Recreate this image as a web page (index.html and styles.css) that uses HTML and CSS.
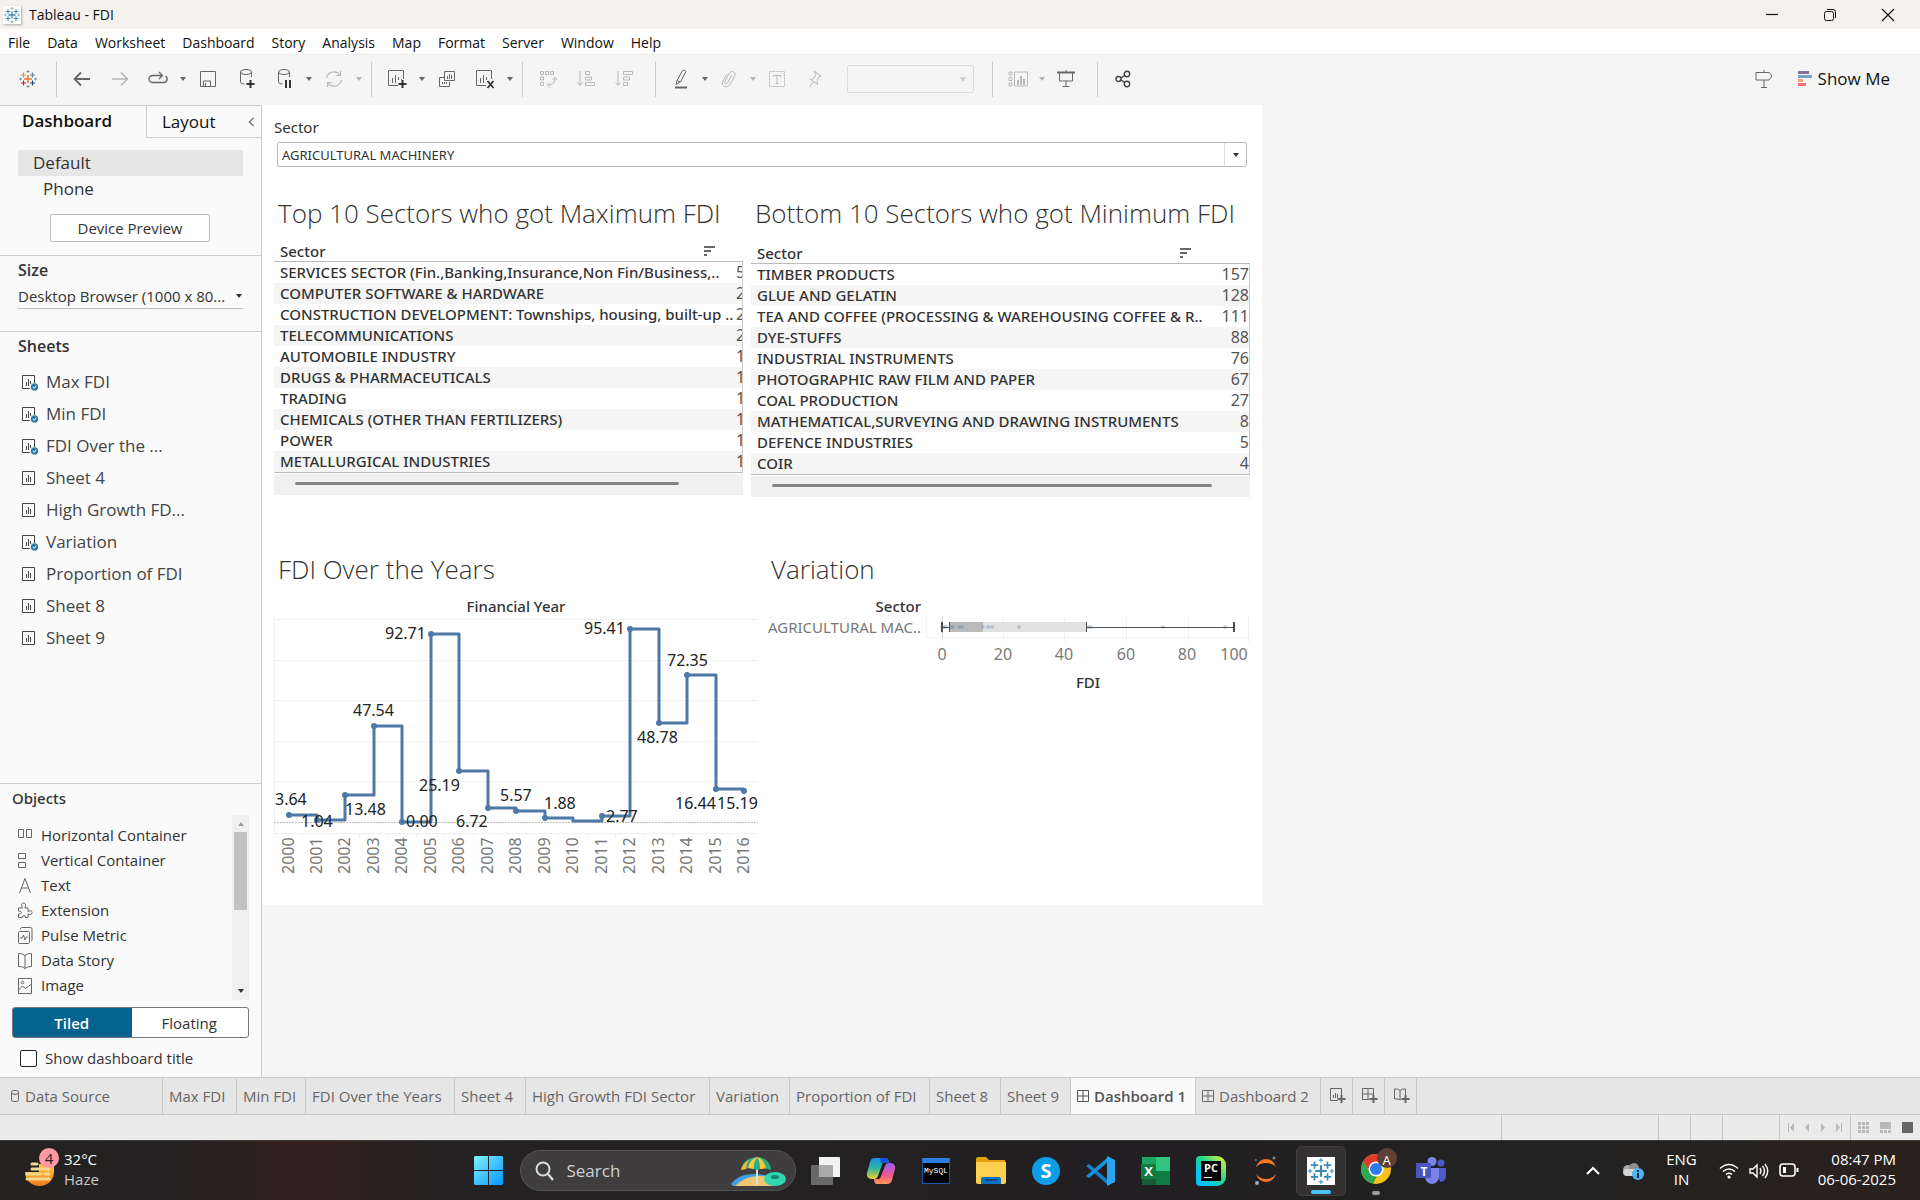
FILE: index.html
```html
<!DOCTYPE html>
<html lang="en">
<head>
<meta charset="utf-8">
<title>Tableau - FDI</title>
<link rel="stylesheet" href="styles.css">
</head>
<body>
<svg class="sprite" aria-hidden="true">
  <symbol id="caret" viewBox="0 0 8 6"><path d="M1 1h6L4 5z" fill="currentColor"/></symbol>
  <symbol id="sheet" viewBox="0 0 18 18"><path d="M1.500 2.500h12v13h-12zM5.500 9v4M7.500 6v7M9.500 8v5" /></symbol>
  <symbol id="sheet-used" viewBox="0 0 18 18"><path d="M9 15.500H1.500v-13h12V10M5.500 9v4M7.500 6v7M9.500 8v3"/><circle cx="13.500" cy="14" r="3.700" fill="#2e7ea6" stroke="none"/><path d="M11.800 14l1.300 1.300 2.200-2.600" stroke="#fff"/></symbol>
  <symbol id="grid4" viewBox="0 0 12 12"><path d="M.5.5h11v11H.5zM6 .5v11M.5 6h11"/></symbol>
  <symbol id="sortmark" viewBox="0 0 11 10"><path d="M0 1h11M0 5h7M0 9h3" stroke-width="2"/></symbol>
  <symbol id="marks" viewBox="0 0 18 18">
    <path d="M9 5v8M5 9h8" stroke="var(--c1)" stroke-width="1.500"/>
    <path d="M4.500 2.500v5M2 5h5" stroke="var(--c2)" stroke-width="1.200"/>
    <path d="M13.500 2.500v5M11 5h5" stroke="var(--c3)" stroke-width="1.200"/>
    <path d="M4.500 10.500v5M2 13h5" stroke="var(--c4)" stroke-width="1.200"/>
    <path d="M13.500 10.500v5M11 13h5" stroke="var(--c5)" stroke-width="1.200"/>
    <path d="M9 0v3M7.500 1.500h3M9 15v3M7.500 16.500h3M1.500 7.500v3M0 9h3M16.500 7.500v3M15 9h3" stroke="var(--c6)"/>
  </symbol>
</svg>

<div class="app">
  <header class="titlebar">
    <span class="app-icon"><svg class="marks-blue" width="16" height="16"><use href="#marks"/></svg></span>
    <span class="app-title">Tableau - FDI</span>
    <div class="window-buttons">
      <button aria-label="Minimize"><svg width="14" height="14" viewBox="0 0 14 14"><path d="M1 6.500h12" stroke-width="1.200"/></svg></button>
      <button aria-label="Restore"><svg width="14" height="14" viewBox="0 0 14 14"><rect x="1.500" y="3.500" width="9" height="9" rx="2"/><path d="M4 1.500h6q2.500 0 2.500 2.500v6"/></svg></button>
      <button aria-label="Close"><svg width="14" height="14" viewBox="0 0 14 14"><path d="M1 1l12 12M13 1L1 13" stroke-width="1.200"/></svg></button>
    </div>
  </header>

  <nav class="menubar">
    <button>File</button><button>Data</button><button>Worksheet</button><button>Dashboard</button><button>Story</button><button>Analysis</button><button>Map</button><button>Format</button><button>Server</button><button>Window</button><button>Help</button>
  </nav>

  <div class="toolbar">
    <button class="logo" aria-label="Start page"><svg class="marks-color" width="18" height="18"><use href="#marks"/></svg></button>
    <i class="sep"></i>
    <div class="tools">
      <button aria-label="Undo"><svg width="18" height="18" viewBox="0 0 18 18"><path d="M17 9H2M8 2.500L1.500 9 8 15.500" stroke-width="1.800"/></svg></button>
      <button class="off" aria-label="Redo"><svg width="18" height="18" viewBox="0 0 18 18"><path d="M1 9h15M10 2.500L16.500 9 10 15.500" stroke-width="1.600"/></svg></button>
      <button aria-label="Replay"><svg width="20" height="18" viewBox="0 0 20 18"><path d="M14 5.500H4.500a3.500 3.500 0 0 0 0 7h11a3.500 3.500 0 0 0 2-6.500M11 2l3.500 3.500L11 9" stroke-width="1.300"/></svg></button>
      <button class="more" aria-label="Replay options"><svg width="8" height="6"><use href="#caret"/></svg></button>
      <button aria-label="Save"><svg width="18" height="18" viewBox="0 0 18 18"><path d="M1.500 1.500h15v15h-15zM4.500 16v-5h7v5M6.500 13v3"/></svg></button>
      <button aria-label="New data source"><svg width="18" height="22" viewBox="0 0 18 22"><path d="M3.500 4v10q0 2 4 2M14.500 4v5"/><ellipse cx="9" cy="4" rx="5.500" ry="2.500"/><path d="M13.500 12v8M9.500 16h8" stroke="#333" stroke-width="2"/></svg></button>
      <button aria-label="Pause auto updates"><svg width="18" height="22" viewBox="0 0 18 22"><path d="M3.500 4v10q0 2 4 2M14.500 4v5"/><ellipse cx="9" cy="4" rx="5.500" ry="2.500"/><path d="M11 12v8M15 12v8" stroke="#333" stroke-width="2"/></svg></button>
      <button class="more" aria-label="Update options"><svg width="8" height="6"><use href="#caret"/></svg></button>
      <button class="off" aria-label="Run update"><svg width="18" height="18" viewBox="0 0 18 18"><path d="M1.500 8A7.500 7.500 0 0 1 15 5M16.500 10A7.500 7.500 0 0 1 3 13M15.500 1v4.500H11M2.500 17v-4.500H7" stroke-width="1.200"/></svg></button>
      <button class="more off" aria-label="Run options"><svg width="8" height="6"><use href="#caret"/></svg></button>
    </div>
    <i class="sep"></i>
    <div class="tools">
      <button aria-label="New worksheet"><svg width="20" height="20" viewBox="0 0 20 20"><path d="M11 16.500H1.500v-15h15V10M5.500 9v5M8.500 6v8M11.500 8v3M14.500 10v1"/><path d="M15.500 11v8M11.500 15h8" stroke="#333" stroke-width="2"/></svg></button>
      <button class="more" aria-label="New worksheet options"><svg width="8" height="6"><use href="#caret"/></svg></button>
      <button aria-label="Duplicate"><svg width="18" height="18" viewBox="0 0 18 18"><path d="M6.500 1.500h10v9h-10zM9.500 6v3M11.500 4v5M13.500 5v4M6 7.500H1.500v9h10V12M4.500 12v2M6.500 12v2M8.500 12v2"/></svg></button>
      <button aria-label="Clear sheet"><svg width="20" height="20" viewBox="0 0 20 20"><path d="M11 16.500H1.500v-15h15V10M5.500 9v5M8.500 6v8M11.500 8v3"/><path d="M12.500 12l6 7M18.500 12l-6 7" stroke="#333" stroke-width="1.800"/></svg></button>
      <button class="more" aria-label="Clear options"><svg width="8" height="6"><use href="#caret"/></svg></button>
    </div>
    <i class="sep"></i>
    <div class="tools roomy">
      <button class="off" aria-label="Swap rows and columns"><svg width="18" height="18" viewBox="0 0 18 18"><path d="M1.500 1.500h3v3h-3zM6.500 1.500h3v3h-3zM11.500 1.500h3v3h-3zM1.500 7h3v3h-3zM1.500 12.500h3v3h-3zM16 8q0 7-7 7M13.500 10L16 7.500l2 2.500M11 12.500L8.500 15l2.500 2.500"/></svg></button>
      <button class="off" aria-label="Sort ascending"><svg width="18" height="18" viewBox="0 0 18 18"><path d="M3 1v14M.5 12.500L3 15.500l2.500-3M8.500 1.500h4v3h-4zM8.500 7h6v3h-6zM8.500 12.500h9v3h-9z"/></svg></button>
      <button class="off" aria-label="Sort descending"><svg width="18" height="18" viewBox="0 0 18 18"><path d="M3 1v14M.5 12.500L3 15.500l2.500-3M8.500 1.500h9v3h-9zM8.500 7h6v3h-6zM8.500 12.500h4v3h-4z"/></svg></button>
    </div>
    <i class="sep"></i>
    <div class="tools tight">
      <button aria-label="Highlight"><svg width="16" height="20" viewBox="0 0 16 20"><path d="M9.500 1.500q2-1 3.500 1L7.500 13l-3.500-1.500zM4 11.500l-1 4 4-2.500"/><path d="M2 18.500h12" stroke-width="2"/></svg></button>
      <button class="more" aria-label="Highlight options"><svg width="8" height="6"><use href="#caret"/></svg></button>
      <button class="off" aria-label="Group"><svg width="16" height="18" viewBox="0 0 16 18"><path d="M11 5l-4.500 8q-1 1.500-2.200.5T4 11l4.500-8q1.500-2.500 4-1.200t1.300 4L9 14.500q-2.500 3.500-5.500 2T2 11l4-7"/></svg></button>
      <button class="more off" aria-label="Group options"><svg width="8" height="6"><use href="#caret"/></svg></button>
      <button class="off" aria-label="Show mark labels"><svg width="18" height="18" viewBox="0 0 18 18"><path d="M1.500 1.500h15v15h-15z" stroke-dasharray="2 1"/><path d="M5.500 7V5.500h7V7M9 5.500v8M7.500 13.500h3"/></svg></button>
      <button class="off" aria-label="Fix axes"><svg width="16" height="18" viewBox="0 0 16 18"><path d="M7 1l7 5-2.500.8-1.500 4.500.5 3L3.500 9.500l3-1L9 4.500zM6.500 11.500L2.500 17"/></svg></button>
    </div>
    <span class="fit"><select disabled aria-label="Fit"><option></option></select><svg width="10" height="7" viewBox="0 0 8 6"><use href="#caret"/></svg></span>
    <i class="sep"></i>
    <div class="tools tight roomy">
      <button class="off" aria-label="Show or hide cards"><svg width="20" height="18" viewBox="0 0 20 18"><path d="M1 2h3v3H1zM1 7.500h3v3H1zM1 13h3v3H1zM6.500 2h13v14h-13z"/><path d="M10 10v5M13 6v9M16 9v6" stroke-width="2"/></svg></button>
      <button class="more off" aria-label="Card options"><svg width="8" height="6"><use href="#caret"/></svg></button>
      <button aria-label="Presentation mode"><svg width="18" height="18" viewBox="0 0 18 18"><path d="M0 2.500h18" stroke-width="2"/><path d="M2.500 3v8h13V3M9 0v2M9 11v6M5.500 16.500h7"/></svg></button>
    </div>
    <i class="sep"></i>
    <div class="tools tight">
      <button aria-label="Share"><svg width="16" height="18" viewBox="0 0 16 18"><g stroke="#444" stroke-width="1.400"><circle cx="3.500" cy="9" r="2.500"/><circle cx="12" cy="4" r="2.700"/><circle cx="12" cy="14" r="2.700"/><path d="M6 8l3.500-2.500M6 10l3.500 2.500"/></g></svg></button>
    </div>
    <div class="right-tools">
      <button aria-label="Guide"><svg width="18" height="20" viewBox="0 0 18 20"><path d="M1 3.500h13l3 3.500-3 4H1zM9 1v2.500M9 11v8M6 18.500h6"/></svg></button>
      <button class="show-me"><svg class="solid" width="14" height="16" viewBox="0 0 14 16"><path d="M0 0h11v3H0z" fill="#84709b"/><path d="M0 4h14v3H0z" fill="#7ba2cc"/><path d="M0 8h5v3H0z" fill="#f2a27e"/><path d="M0 12h8v3H0z" fill="#f9707a"/></svg>Show Me</button>
    </div>
  </div>

  <div class="workspace">
    <aside class="pane">
      <div class="pane-tabs">
        <button class="on">Dashboard</button>
        <button class="layout-tab">Layout <svg width="7" height="10" viewBox="0 0 8 12"><path d="M6.500 1L1.500 6l5 5" stroke="#666" stroke-width="1.400"/></svg></button>
      </div>
      <section class="devices">
        <button class="device on">Default</button>
        <button class="device phone">Phone</button>
        <button class="preview">Device Preview</button>
      </section>
      <section class="size">
        <h2><label for="size">Size</label></h2>
        <span class="size-box"><select id="size"><option>Desktop Browser (1000 x 80...</option></select><svg width="8" height="6"><use href="#caret"/></svg></span>
      </section>
      <section class="sheets">
        <h2>Sheets</h2>
        <ul>
          <li><svg width="18" height="18"><use href="#sheet-used"/></svg>Max FDI</li>
          <li><svg width="18" height="18"><use href="#sheet-used"/></svg>Min FDI</li>
          <li><svg width="18" height="18"><use href="#sheet-used"/></svg>FDI Over the ...</li>
          <li><svg width="18" height="18"><use href="#sheet"/></svg>Sheet 4</li>
          <li><svg width="18" height="18"><use href="#sheet"/></svg>High Growth FD...</li>
          <li><svg width="18" height="18"><use href="#sheet-used"/></svg>Variation</li>
          <li><svg width="18" height="18"><use href="#sheet"/></svg>Proportion of FDI</li>
          <li><svg width="18" height="18"><use href="#sheet"/></svg>Sheet 8</li>
          <li><svg width="18" height="18"><use href="#sheet"/></svg>Sheet 9</li>
        </ul>
      </section>
      <section class="objects">
        <h2>Objects</h2>
        <div class="object-box">
          <ul>
            <li><svg width="16" height="18" viewBox="0 0 16 18"><path d="M1.500 3.500h5v8h-5zM9.500 3.500h5v8h-5z"/></svg>Horizontal Container</li>
            <li><svg width="16" height="18" viewBox="0 0 16 18"><path d="M1.500 2.500h7v5h-7zM1.500 11.500h7v5h-7z"/></svg>Vertical Container</li>
            <li><svg width="16" height="18" viewBox="0 0 16 18"><path d="M2.500 17L8 2.500 13.500 17M4.500 12h7"/></svg>Text</li>
            <li><svg width="16" height="18" viewBox="0 0 16 18"><path d="M1.500 7h4q-2-5 1-5t1.500 5h3v3.500q4-2 4 1t-4 1.500v3.500H8.500q0-2-1.500-2t-1.500 2h-4V13q3 0 3-1.500t-3-1.500z"/></svg>Extension</li>
            <li><svg width="16" height="18" viewBox="0 0 16 18"><rect x="1.500" y="5.500" width="11" height="12" rx="1"/><path d="M3.500 3.500q0-2 1-2h9q1.500 0 1.500 1.500v11q0 1-1 1M3 12h2l1.500-3 1.500 5 1.500-3H11"/></svg>Pulse Metric</li>
            <li><svg width="16" height="18" viewBox="0 0 16 18"><path d="M8 4.500Q5 2 1.500 2.500v13Q5 15 8 17.500q3-2.500 6.500-2v-13Q11 2 8 4.500zM8 4.500v13"/></svg>Data Story</li>
            <li><svg width="16" height="18" viewBox="0 0 16 18"><path d="M1.500 2.500h13v15h-13zM1.500 14l4-4 3 2.500L14.500 8"/><circle cx="5.500" cy="6.500" r="1.300"/></svg>Image</li>
          </ul>
          <div class="scrollbar"><svg width="8" height="6" viewBox="0 0 8 6"><path d="M1 5h6L4 1z" fill="#a0a0a0" stroke="none"/></svg><i></i><svg class="down" width="8" height="6"><use href="#caret"/></svg></div>
        </div>
        <div class="mode"><button class="on">Tiled</button><button>Floating</button></div>
        <label class="check"><input type="checkbox">Show dashboard title</label>
      </section>
    </aside>

    <main class="stage">
      <article class="dash">
        <div class="filter">
          <label for="sector">Sector</label>
          <span class="filter-box"><select id="sector"><option>AGRICULTURAL MACHINERY</option></select><span class="arrow"><svg width="8" height="6"><use href="#caret"/></svg></span></span>
        </div>

        <div class="row tables">
          <section>
            <h3>Top 10 Sectors who got Maximum FDI</h3>
            <table class="max">
              <colgroup><col><col class="num-clip"></colgroup>
              <thead><tr><th scope="col" colspan="2"><span class="head">Sector<svg width="11" height="10"><use href="#sortmark"/></svg></span></th></tr></thead>
              <tbody>
                <tr><td>SERVICES SECTOR (Fin.,Banking,Insurance,Non Fin/Business,..</td><td>5</td></tr>
                <tr><td>COMPUTER SOFTWARE &amp; HARDWARE</td><td>2</td></tr>
                <tr><td>CONSTRUCTION DEVELOPMENT: Townships, housing, built-up ..</td><td>2</td></tr>
                <tr><td>TELECOMMUNICATIONS</td><td>2</td></tr>
                <tr><td>AUTOMOBILE INDUSTRY</td><td>1</td></tr>
                <tr><td>DRUGS &amp; PHARMACEUTICALS</td><td>1</td></tr>
                <tr><td>TRADING</td><td>1</td></tr>
                <tr><td>CHEMICALS (OTHER THAN FERTILIZERS)</td><td>1</td></tr>
                <tr><td>POWER</td><td>1</td></tr>
                <tr><td>METALLURGICAL INDUSTRIES</td><td>1</td></tr>
              </tbody>
            </table>
            <div class="hscroll"><i class="thumb-max"></i></div>
          </section>
          <section>
            <h3>Bottom 10 Sectors who got Minimum FDI</h3>
            <table class="min">
              <colgroup><col><col class="num"></colgroup>
              <thead><tr><th scope="col" colspan="2"><span class="head">Sector<svg width="11" height="10"><use href="#sortmark"/></svg></span></th></tr></thead>
              <tbody>
                <tr><td>TIMBER PRODUCTS</td><td>157</td></tr>
                <tr><td>GLUE AND GELATIN</td><td>128</td></tr>
                <tr><td>TEA AND COFFEE (PROCESSING &amp; WAREHOUSING COFFEE &amp; R..</td><td>111</td></tr>
                <tr><td>DYE-STUFFS</td><td>88</td></tr>
                <tr><td>INDUSTRIAL INSTRUMENTS</td><td>76</td></tr>
                <tr><td>PHOTOGRAPHIC RAW FILM AND PAPER</td><td>67</td></tr>
                <tr><td>COAL PRODUCTION</td><td>27</td></tr>
                <tr><td>MATHEMATICAL,SURVEYING AND DRAWING INSTRUMENTS</td><td>8</td></tr>
                <tr><td>DEFENCE INDUSTRIES</td><td>5</td></tr>
                <tr><td>COIR</td><td>4</td></tr>
              </tbody>
            </table>
            <div class="hscroll"><i class="thumb-min"></i></div>
          </section>
        </div>

        <div class="row charts">
          <section>
            <h3>FDI Over the Years</h3>
            <svg class="chart" width="485" height="286" viewBox="0 -22 485 286">
              <text class="bold" x="242" y="-5" text-anchor="middle">Financial Year</text>
              <g class="grid"><path d="M0 2.500h484M0 43.500h484M0 83.500h484M0 124.500h484M0 164.500h484M0 216.500h484M.5 0v220M28.500 217v3M56.500 217v3M85.500 217v3M113.500 217v3M142.500 217v3M170.500 217v3M199.500 217v3M227.500 217v3M256.500 217v3M284.500 217v3M313.500 217v3M341.500 217v3M370.500 217v3M398.500 217v3M427.500 217v3M455.500 217v3"/></g>
              <path d="M0 205.500h484" stroke="#bbb" stroke-dasharray="2 1"/>
              <path class="line" d="M15 198H43V203H71V178H100V109H128V205H157V17H185V154H214V191H242V194H271V201H299V204H328V199H356V12H385V106H413V58H442V172H470V174"/>
              <g class="dots"><circle cx="15" cy="198" r="3"/><circle cx="43" cy="203" r="3"/><circle cx="71" cy="178" r="3"/><circle cx="100" cy="109" r="3"/><circle cx="128" cy="205" r="3"/><circle cx="157" cy="17" r="3"/><circle cx="185" cy="154" r="3"/><circle cx="214" cy="191" r="3"/><circle cx="242" cy="194" r="3"/><circle cx="271" cy="201" r="3"/><circle cx="328" cy="199" r="3"/><circle cx="356" cy="12" r="3"/><circle cx="385" cy="106" r="3"/><circle cx="413" cy="58" r="3"/><circle cx="442" cy="172" r="3"/><circle cx="470" cy="174" r="3"/></g>
              <g class="values">
                <text x="1" y="188">3.64</text><text x="27" y="210">1.04</text><text x="71" y="198">13.48</text><text x="79" y="99">47.54</text><text x="132" y="210">0.00</text><text x="111" y="22">92.71</text><text x="145" y="174">25.19</text><text x="182" y="210">6.72</text><text x="226" y="184">5.57</text><text x="270" y="192">1.88</text><text x="332" y="205">2.77</text><text x="310" y="17">95.41</text><text x="363" y="126">48.78</text><text x="393" y="49">72.35</text><text x="401" y="192">16.44</text><text x="443" y="192">15.19</text>
              </g>
              <g class="years">
                <text transform="translate(20 257) rotate(-90)">2000</text><text transform="translate(48 257) rotate(-90)">2001</text><text transform="translate(76 257) rotate(-90)">2002</text><text transform="translate(105 257) rotate(-90)">2003</text><text transform="translate(133 257) rotate(-90)">2004</text><text transform="translate(162 257) rotate(-90)">2005</text><text transform="translate(190 257) rotate(-90)">2006</text><text transform="translate(219 257) rotate(-90)">2007</text><text transform="translate(247 257) rotate(-90)">2008</text><text transform="translate(276 257) rotate(-90)">2009</text><text transform="translate(304 257) rotate(-90)">2010</text><text transform="translate(333 257) rotate(-90)">2011</text><text transform="translate(361 257) rotate(-90)">2012</text><text transform="translate(390 257) rotate(-90)">2013</text><text transform="translate(418 257) rotate(-90)">2014</text><text transform="translate(447 257) rotate(-90)">2015</text><text transform="translate(475 257) rotate(-90)">2016</text>
              </g>
            </svg>
          </section>
          <section>
            <h3>Variation</h3>
            <svg class="chart" width="483" height="110" viewBox="0 0 483 110">
              <text class="bold" x="154" y="17" text-anchor="end">Sector</text>
              <text class="member" x="154" y="38" text-anchor="end">AGRICULTURAL MAC..</text>
              <g class="grid"><path d="M159 42.500h324M159.500 22v20M175.500 42v5M236.500 22v25M297.500 22v25M359.500 22v25M421.500 22v25M481.500 22v25"/></g>
              <path d="M175.500 22v20" stroke="#bbb" stroke-dasharray="2 1"/>
              <path d="M182 27h34v10h-34z" fill="#bababa" stroke="none"/><path d="M216 27h103v10H216z" fill="#e1e1e1" stroke="none"/>
              <g class="points"><circle cx="175" cy="32" r="2"/><circle cx="177" cy="32" r="2"/><circle cx="179" cy="32" r="2"/><circle cx="184" cy="32" r="2"/><circle cx="186" cy="32" r="2"/><circle cx="192" cy="32" r="2"/><circle cx="195" cy="32" r="2"/><circle cx="216" cy="32" r="2"/><circle cx="221" cy="32" r="2"/><circle cx="225" cy="32" r="2"/><circle cx="252" cy="32" r="2"/><circle cx="321" cy="32" r="2"/><circle cx="324" cy="32" r="2"/><circle cx="396" cy="32" r="2"/><circle cx="458" cy="32" r="2"/></g>
              <path d="M175 32.500h7M319 32.500h148M182.500 27v10M319.500 27v10" stroke="#4c4e52"/><path d="M175 27v10M467 27v10" stroke="#4c4e52" stroke-width="2"/>
              <g class="axis" text-anchor="middle"><text x="175" y="65">0</text><text x="236" y="65">20</text><text x="297" y="65">40</text><text x="359" y="65">60</text><text x="420" y="65">80</text><text x="467" y="65">100</text></g>
              <text class="bold" x="321" y="93" text-anchor="middle">FDI</text>
            </svg>
          </section>
        </div>
      </article>
    </main>
  </div>

  <nav class="sheet-tabs">
    <button class="first"><svg width="9" height="13" viewBox="0 0 9 13"><rect x=".5" y=".5" width="7" height="11" rx="2"/><path d="M.5 3.500q3.500 2 7 0"/></svg>Data Source</button>
    <button>Max FDI</button><button>Min FDI</button><button>FDI Over the Years</button><button>Sheet 4</button><button>High Growth FDI Sector</button><button>Variation</button><button>Proportion of FDI</button><button>Sheet 8</button><button>Sheet 9</button>
    <button class="on"><svg width="12" height="12"><use href="#grid4"/></svg>Dashboard 1</button>
    <button><svg width="12" height="12"><use href="#grid4"/></svg>Dashboard 2</button>
    <button class="add" aria-label="New worksheet"><svg width="16" height="16" viewBox="0 0 16 16"><path d="M8 12.500H.5V.500h11V7M3.500 7v3M5.500 5v5M7.500 6v4"/><path d="M11.500 7v8M7.500 11h8" stroke-width="2"/></svg></button>
    <button class="add" aria-label="New dashboard"><svg width="16" height="16" viewBox="0 0 16 16"><path d="M7 11.500H.5V.500h11V7M6 .5v11M.5 6h11"/><path d="M11.500 7v8M7.500 11h8" stroke-width="2"/></svg></button>
    <button class="add" aria-label="New story"><svg width="16" height="16" viewBox="0 0 16 16"><path d="M7 12Q4 10.500.5 11V1Q4 .5 6 2.500 8 .5 11.500 1v6M6 2.500V12"/><path d="M11.500 7v8M7.500 11h8" stroke-width="2"/></svg></button>
    <span></span>
  </nav>

  <footer class="status">
    <span></span><span></span><span></span><span></span><span></span>
    <span class="pager"><svg width="60" height="9" viewBox="0 0 60 9"><path d="M1 0h1v9H1zM7 0v9L3 4.500zM22 0v9l-4-4.500zM34 0v9l4-4.500zM49 0v9l4-4.500zM54 0h1v9h-1z"/></svg></span>
    <span class="views"><svg width="56" height="12" viewBox="0 0 56 12"><path d="M0 0h3v3H0zM4 0h3v3H4zM8 0h3v3H8zM0 4h3v3H0zM4 4h3v3H4zM8 4h3v3H8zM0 8h3v3H0zM4 8h3v3H4zM8 8h3v3H8zM22 0h11v7H22zM22 8h3v3h-3zM26 8h3v3h-3zM30 8h3v3h-3z"/><path d="M44 0h11v11H44z" fill="#666"/></svg></span>
  </footer>

  <footer class="taskbar">
    <div class="weather">
      <svg width="40" height="38" viewBox="0 0 40 38"><defs><linearGradient id="sun" x2="0" y2="1"><stop stop-color="#ffc83d"/><stop offset="1" stop-color="#f17a1b"/></linearGradient></defs><path d="M4 20H33A14.500 14 0 0 1 4 20zM18 12h15v9H18z" fill="url(#sun)"/><path d="M11 12h5M11 17h17M6 22h14M24 22h4M6 27h22" stroke="#f3d98d" stroke-width="3" stroke-linecap="round"/></svg>
      <b>4</b>
      <p>32°C<span>Haze</span></p>
    </div>
    <div class="apps">
      <button aria-label="Start"><svg width="30" height="30" viewBox="0 0 30 30"><defs><linearGradient id="win" x2="1" y2="1"><stop stop-color="#7ff3ff"/><stop offset="1" stop-color="#0795ff"/></linearGradient></defs><path d="M1 0h13v14H0V1zM15 0h13l1 1v13H15zM0 15h14v14H1l-1-1zM15 15h14v13l-1 1H15z" fill="url(#win)"/></svg></button>
      <label class="search"><svg width="20" height="22" viewBox="0 0 20 22"><circle cx="8" cy="9" r="6.500" stroke-width="2"/><path d="M13 14l5 6" stroke-width="2.200"/></svg><input type="text" placeholder="Search" aria-label="Search">
        <svg class="solid" width="56" height="32" viewBox="0 0 56 32"><path d="M0 29Q8 18 24 19q14 0 22 8L30 31H2z" fill="#3ea0ea"/><path d="M4 31q10-10 24-10 12 0 20 6l-6 4z" fill="#f3c66c"/><path d="M25 2h2v28h-2z" fill="#ddd"/><path d="M10 15Q12 3 26 2q13 1 14 13l-7-2-7 2-8-2z" fill="#26b08d"/><path d="M17 13Q19 4 26 2q-4 6-3 12zM29 14q0-8-3-12 7 2 9 11.500z" fill="#ffc636"/><path d="M10 15Q12 8 18 5q-3 4-3 9z" fill="#ffb52e"/><ellipse cx="44" cy="24" rx="11" ry="7" fill="#2fd6b0"/><ellipse cx="44" cy="22" rx="4" ry="2" fill="#15866f"/></svg>
      </label>
      <button aria-label="Task view"><svg width="30" height="28" viewBox="0 0 30 28"><path d="M8 0h20q1 0 1 1v19H8z" fill="#f2f2f2"/><path d="M0 8h22v19q0 1-1 1H1q-1 0-1-1z" fill="#777" opacity=".85"/><path d="M8 8h14v12H8z" fill="#aaa"/></svg></button>
      <button aria-label="Copilot"><svg width="30" height="28" viewBox="0 0 30 28"><defs><linearGradient id="cpa" x2="0" y2="1"><stop stop-color="#1a8be8"/><stop offset=".5" stop-color="#30b8a0"/><stop offset="1" stop-color="#f5cf2c"/></linearGradient><linearGradient id="cpb" x2="0" y2="1"><stop stop-color="#9a5cf0"/><stop offset=".6" stop-color="#f3588c"/><stop offset="1" stop-color="#ff9a5a"/></linearGradient></defs><path d="M9 1h11q2 0 3 4h-6l-5 14q-1 3-4 3H5q-5-1-4-6L4 5q1-4 5-4z" fill="url(#cpa)"/><path d="M14 1h6q2 0 3 5h-8z" fill="#1852d8"/><path d="M22 6h3q5 1 4 6l-3 11q-1 4-5 4H11q-3 0-3-5h5q1 0 2-3l4-10q1-3 3-3z" fill="url(#cpb)"/></svg></button>
      <button aria-label="MySQL"><span class="mysql">MySQL</span></button>
      <button aria-label="File Explorer"><svg width="32" height="28" viewBox="0 0 32 28"><path d="M1 2q0-2 2-2h8l3 3h16v10H1z" fill="#e3a008"/><path d="M1 5h30v20q0 2-2 2H3q-2 0-2-2z" fill="#ffd04f"/><path d="M6 27v-5q0-2 2-2h16q2 0 2 2v5z" fill="#0b6fc4"/><path d="M10 23h12" stroke="#063f78" stroke-width="1.500"/></svg></button>
      <button aria-label="Skype"><span class="skype">S</span></button>
      <button aria-label="Visual Studio Code"><svg width="30" height="30" viewBox="0 0 30 30"><path d="M0 10l3-2 19 16v5z" fill="#0e7fcb"/><path d="M0 20l3 2L22 6V1z" fill="#1490dc"/><path d="M21 0l8 4v22l-8 4z" fill="#2ba4f0"/></svg></button>
      <button aria-label="Excel"><span class="excel"><b>X</b></span></button>
      <button aria-label="PyCharm"><span class="pycharm"><b>PC</b></span></button>
      <button aria-label="Jupyter"><svg width="24" height="30" viewBox="0 0 24 30"><path d="M2 11q3-8 10-8t10 8q-4-4-10-4T2 11zM2 18q4 5 10 5t10-5q-3 8-10 8T2 18z" fill="#f37726"/><circle cx="20" cy="2" r="1.500" fill="#888"/><circle cx="3" cy="27" r="2" fill="#aaa"/><circle cx="2" cy="4" r="1" fill="#777"/></svg></button>
      <button class="current" aria-label="Tableau"><span class="tab-tile"><svg class="marks-blue" width="26" height="26"><use href="#marks"/></svg></span></button>
      <button class="open" aria-label="Chrome"><svg width="36" height="38" viewBox="0 0 36 38"><circle cx="15" cy="21" r="15" fill="#fbc116"/><path d="M2 13.500A15 15 0 0 1 28 13.500L15 14 9 24z" fill="#e33b2e"/><path d="M2 13.500l7 11 7 3.500-4 7.700A15 15 0 0 1 2 13.500z" fill="#2da94f"/><circle cx="15" cy="21" r="7.500" fill="#fff"/><circle cx="15" cy="21" r="6" fill="#2d7bf0"/><circle cx="26" cy="10" r="10" fill="#5d4037"/></svg><b>A</b></button>
      <button aria-label="Teams"><svg width="30" height="28" viewBox="0 0 30 28"><circle cx="25" cy="6" r="3.500" fill="#5059c9"/><path d="M20 11h9q1 0 1 1v8q-1 5-6 5z" fill="#5059c9"/><circle cx="16" cy="4.500" r="4.500" fill="#7b83eb"/><path d="M9 11h14v9q-1 7-7 7t-7-7z" fill="#7b83eb"/><path d="M0 6h15v15H0z" fill="#4b53bc"/></svg><b class="t">T</b></button>
    </div>
    <div class="tray">
      <button aria-label="Show hidden icons"><svg width="14" height="9" viewBox="0 0 14 9"><path d="M1 8l6-6 6 6" stroke-width="2"/></svg></button>
      <button aria-label="OneDrive"><svg class="solid" width="22" height="20" viewBox="0 0 22 20"><circle cx="6" cy="9" r="5" fill="#aaa"/><circle cx="12" cy="7" r="5" fill="#8c8c8c"/><path d="M3 8h12v7H4q-3-1-3-4z" fill="#d5d5d5"/><circle cx="16" cy="13" r="6" fill="#4cb6f0"/><path d="M15 9h2v2h-2zM15 12h2v5h-2z" fill="#112233"/></svg></button>
      <p class="lang">ENG<span>IN</span></p>
      <button class="net" aria-label="Network, sound and battery"><svg width="20" height="16" viewBox="0 0 20 16"><path d="M1 5.500q9-8 18 0M4 8.500q6-5 12 0M7 11.500q3-2.500 6 0" stroke-width="1.600"/><circle cx="10" cy="14" r="1.600" fill="#fff" stroke="none"/></svg><svg width="20" height="16" viewBox="0 0 20 16"><path d="M1 6v4h3l4 4V2L4 6zM11 5q2 3 0 6M13.500 3q4 5 0 10M16 1q5.500 7 0 14" stroke-width="1.400"/></svg><svg width="20" height="14" viewBox="0 0 20 14"><rect x="1" y="1" width="15" height="12" rx="3" stroke-width="1.600"/><path d="M4 4h3v6H4z" fill="#fff" stroke="none"/><path d="M18.500 5v4" stroke-width="2"/></svg></button>
      <p class="clock">08:47 PM<span>06-06-2025</span></p>
    </div>
  </footer>
</div>
</body>
</html>
```
FILE: styles.css
```css
* { box-sizing: border-box; }
body { margin: 0; font: 15px/20px "Open Sans", "Noto Sans", sans-serif; color: #333; background: #f5f5f5; }
button { font: inherit; color: inherit; background: none; border: 0; padding: 0; margin: 0; }
select, input { font: inherit; color: inherit; }
ul { list-style: none; margin: 0; padding: 0; }
h2, h3, p { margin: 0; }
svg { display: block; flex: none; fill: none; stroke: currentColor; overflow: visible; }
svg.solid { stroke: none; }
.sprite { position: absolute; width: 0; height: 0; }
symbol { overflow: visible; }
use[href="#caret"] { stroke: none; }
.marks-blue { --c1: #3d88b7; --c2: #3d88b7; --c3: #3d88b7; --c4: #3d88b7; --c5: #3d88b7; --c6: #6aa6c9; }
.marks-color { --c1: #e8762c; --c2: #eb912b; --c3: #59879b; --c4: #c72037; --c5: #1f447e; --c6: #7199a6; }

.app { min-height: 100vh; display: flex; flex-direction: column; }

/* Title bar and menus */
.titlebar { height: 29px; display: flex; align-items: center; background: #f5f1ef; color: #111; font-size: 14px; }
.app-icon { width: 18px; height: 18px; margin: 0 8px 0 3px; padding: 1px; background: #fff; box-shadow: 1px 1px 2px #aaa; }
.window-buttons { margin-left: auto; padding-right: 3px; display: flex; align-self: stretch; }
.window-buttons button { width: 58px; display: grid; place-items: center; }
.menubar { height: 25px; display: flex; align-items: center; gap: 17px; padding: 2px 0 0 8px; background: #fff; color: #111; font-size: 14px; }

/* Toolbar */
.toolbar { height: 51px; display: flex; align-items: center; padding-bottom: 2px; border-top: 1px solid #ececec; color: #666; background: #f5f5f5; }
.logo { margin: 0 13px 0 19px; }
.sep { width: 1px; height: 35px; background: #ccc; margin: 0 6px; }
.tools { display: flex; align-items: center; }
.tools button { width: 38px; height: 38px; display: grid; place-items: center; }
.tools .more { width: 12px; }
.tight .more { width: 10px; }
.roomy { padding-right: 6px; }
.tools .off { color: #b8b8b8; }
.fit { position: relative; width: 127px; height: 28px; margin: 0 12px 0 13px; }
.fit select { appearance: none; width: 100%; height: 100%; border: 1px solid #d2d2d2; border-radius: 2px; background: none; }
.fit svg { position: absolute; right: 6px; top: 11px; color: #ccc; }
.right-tools { margin-left: auto; display: flex; align-items: center; gap: 25px; padding-right: 30px; }
.show-me { display: flex; align-items: center; gap: 6px; font-size: 17px; color: #111; }

/* Workspace */
.workspace { flex: 1; display: flex; align-items: stretch; }
.pane { width: 262px; flex: none; display: flex; flex-direction: column; background: #fafafa; border: solid #ccc; border-width: 1px 1px 0 0; }
.pane-tabs { display: grid; grid-template-columns: 146px 1fr; height: 32px; font-size: 17px; color: #111; }
.pane-tabs .on { font-weight: 600; text-align: left; padding: 0 0 2px 22px; }
.layout-tab { display: flex; align-items: center; justify-content: space-between; padding: 0 6px 0 15px; border: solid #ccc; border-width: 0 0 1px 1px; }
.devices { height: 118px; padding: 12px 18px 0; border-bottom: 1px solid #ccc; }
.device { display: block; width: 100%; height: 26px; text-align: left; padding-left: 15px; font-size: 17px; }
.device.on { background: #e6e6e6; }
.device.phone { padding-left: 25px; }
.preview { display: block; width: 160px; height: 28px; margin: 12px auto 0 32px; border: 1px solid #bbb; border-radius: 2px; background: #fff; }
.pane h2 { font-size: 16px; line-height: 22px; font-weight: 600; }
.size { height: 76px; padding: 3px 18px 0; border-bottom: 1px solid #ccc; }
.size-box { position: relative; display: block; margin-top: 2px; }
.size-box select { appearance: none; display: block; width: 100%; height: 26px; padding: 0; border: 0; border-bottom: 1px solid #bbb; background: none; }
.size-box svg { position: absolute; right: 0; top: 10px; }
.sheets { flex: 1; padding: 3px 18px; }
.sheets ul { margin-top: 9px; font-size: 17px; }
.sheets li { display: flex; align-items: center; gap: 7px; height: 32px; padding-left: 3px; color: #444; }
.objects { padding: 3px 12px 9px; border-top: 1px solid #ccc; }
.objects h2 { font-family: "Noto Sans", "Open Sans", sans-serif; font-size: 15px; font-weight: 500; }
.object-box { display: flex; justify-content: space-between; height: 185px; margin-top: 6px; overflow: hidden; }
.object-box li { display: flex; align-items: center; gap: 8px; height: 25px; padding-left: 5px; }
.object-box ul { padding-top: 7px; }
.object-box li svg { color: #666; }
.scrollbar { width: 17px; background: #f0f0f0; display: flex; flex-direction: column; align-items: center; padding: 6px 0; }
.scrollbar i { width: 13px; height: 78px; margin-top: 5px; background: #c1c1c1; }
.scrollbar .down { margin-top: auto; }
.mode { display: grid; grid-template-columns: 1fr 1fr; height: 31px; margin-top: 7px; border: 1px solid #777; border-radius: 3px; background: #fff; overflow: hidden; }
.mode .on { background: #04638f; color: #fff; font-weight: 600; box-shadow: 0 0 0 1px #04638f; }
.check { display: flex; align-items: center; gap: 8px; margin: 10px 0 0 8px; }
.check input { appearance: none; width: 17px; height: 17px; margin: 0; border: 1px solid #222; border-radius: 2px; background: #fff; }

/* Dashboard canvas */
.stage { flex: 1; min-width: 0; }
.dash { max-width: 1000px; min-height: 800px; padding: 11px 12px 0; background: #fff; font-family: "Noto Sans", "Open Sans", sans-serif; }
.filter label { display: block; line-height: 22px; }
.filter-box { position: relative; display: block; margin: 4px 3px 0; }
.filter-box select { appearance: none; display: block; width: 100%; height: 25px; padding: 0 4px; border: 1px solid #bbb; border-radius: 2px; background: #fff; font-size: 13px; }
.arrow { position: absolute; right: 1px; top: 1px; width: 22px; height: 23px; display: grid; place-items: center; border-left: 1px solid #ddd; pointer-events: none; }
.row { display: grid; align-items: start; }
.tables { grid-template-columns: 469fr 499fr; gap: 8px; margin-top: 28px; }
.charts { grid-template-columns: 485fr 483fr; gap: 8px; margin-top: 54px; }
.dash h3 { padding-left: 4px; font: 300 26px/36px "Open Sans", "Noto Sans", sans-serif; white-space: nowrap; }
.charts h3 { margin-bottom: 8px; }
.dash table { width: 100%; table-layout: fixed; border-collapse: separate; border-spacing: 0; border-bottom: 1px solid #bbb; }
.dash th { height: 31px; padding: 0 6px; font-weight: 500; text-align: left; border-bottom: 1px solid #bbb; }
.min th { height: 33px; }
.head { display: flex; align-items: center; justify-content: space-between; padding: 9px 22px 0 0; }
.min .head { padding: 11px 53px 0 0; }
.head svg { color: #666; }
.dash td { height: 21px; padding: 0 0 0 6px; line-height: 21px; font-weight: 500; white-space: nowrap; }
.dash td + td { padding: 0; overflow: hidden; border-right: 1px solid #ccc; font-size: 16px; font-weight: 400; color: #555; }
.min td + td { text-align: right; }
.dash tbody tr:nth-child(even) { background: #f5f5f5; }
.num-clip { width: 7px; }
.num { width: 44px; }
.hscroll { height: 21px; margin-top: 1px; padding: 8px 0 0 21px; background: #f0f0f0; }
.hscroll i { display: block; height: 3px; border-radius: 2px; background: #858585; }
.thumb-max { width: 384px; }
.thumb-min { width: 440px; }

.chart { font-size: 15px; }
.chart text { fill: #333; stroke: none; }
.chart .bold { font-weight: 500; }
.chart .member, .chart .axis text, .chart .years text { fill: #787878; }
.chart .axis text, .chart .years text, .chart .values text { font-size: 16px; }
.chart .values text { fill: #222; }
.chart .grid { stroke: #f0f0f0; }
.chart .line { stroke: #4e79a7; stroke-width: 3; stroke-linejoin: round; }
.dots circle { fill: #4e79a7; stroke: none; }
.points circle { fill: #4e79a7; fill-opacity: .3; stroke: none; }

/* Sheet tabs */
.sheet-tabs { display: grid; grid-template-columns: 163px 74px 69px 149px 71px 184px 80px 140px 71px 70px 125px 125px 32px 32px 32px 1fr; height: 38px; border: solid #c8c8c8; border-width: 1px 0; background: #e6e6e6; color: #666; }
.sheet-tabs button { display: flex; align-items: center; gap: 5px; padding-left: 6px; border-right: 1px solid #c8c8c8; white-space: nowrap; }
.sheet-tabs .first { padding-left: 11px; }
.sheet-tabs .on { background: #fafafa; font-weight: 600; color: #555; }
.sheet-tabs .add { padding-left: 9px; }

/* Status bar */
.status { display: grid; grid-template-columns: 1fr 157px 32px 32px 57px 71px 70px; height: 25px; background: #ebebeb; }
.status span { border-left: 1px solid #c8c8c8; }
.status span:first-child { border: 0; }
.status .pager, .status .views { display: flex; align-items: center; padding-left: 7px; }
.status svg { fill: #b8b8b8; stroke: none; }

/* Task bar */
.taskbar { display: grid; grid-template-columns: 1fr auto 1fr; height: 60px; border-top: 1px solid #3a3a38; background: linear-gradient(90deg, #232221 0, #242222 9%, #33201e 16%, #242222 23%, #211f21 60%, #232221 85%, #2a211e 100%); color: #fff; }
.taskbar p { display: flex; flex-direction: column; padding-bottom: 3px; }
.weather { position: relative; display: flex; align-items: center; padding-left: 21px; }
.weather svg { stroke: none; }
.weather b { position: absolute; left: 39px; top: 7px; width: 20px; height: 20px; border-radius: 10px; background: #ff99a4; color: #222; font-weight: 400; text-align: center; }
.weather p { padding-left: 3px; }
.weather span { color: #c8c8c8; }
.apps { display: flex; align-items: center; }
.apps > button { position: relative; width: 55px; height: 50px; display: grid; place-items: center; }
.apps > button > svg { stroke: none; }
.search { display: flex; align-items: center; width: 276px; height: 41px; margin: 0 3px; padding: 0 8px 0 14px; border-radius: 21px; border: 1px solid #555; background: #3f3d3d; color: #ddd; font-size: 17px; }
.search input { flex: 1; min-width: 0; margin-left: 12px; padding: 0; border: 0; background: none; outline: 0; }
.search input::placeholder { color: #d0d0d0; opacity: 1; }
.mysql { width: 28px; height: 26px; border: 1px solid #1656a8; border-top: 5px solid #2a7ee0; background: #000; font: 8px/16px "Liberation Mono", monospace; color: #fff; }
.skype { width: 28px; height: 28px; border-radius: 14px; background: #0a9ee8; font-weight: 700; font-size: 20px; line-height: 28px; }
.excel { width: 28px; height: 28px; padding: 7px 0 0; background: linear-gradient(90deg, #21a366 50%, #33c481 50%) top/100% 50% no-repeat, linear-gradient(90deg, #185c37 50%, #107c41 50%); text-align: left; }
.excel b { display: block; width: 15px; height: 15px; margin-left: -1px; background: #107c41; font-size: 13px; line-height: 15px; text-align: center; }
.pycharm { width: 30px; height: 30px; padding: 5px; border-radius: 4px 9px 9px 4px; background: linear-gradient(225deg, #f6f03a 0, #21d789 45%, #07c3f2 75%); }
.pycharm b { display: block; width: 20px; height: 20px; background: linear-gradient(#fff, #fff) 3px 16px/8px 1px no-repeat #000; font-size: 11px; line-height: 14px; }
.apps .current { width: 50px; margin: 0 3px 0 2px; border-radius: 5px; background: #343132; border: 1px solid #403d3e; }
.current::after, .open::after { content: ""; position: absolute; left: 50%; bottom: 1px; width: 20px; height: 4px; margin-left: -10px; border-radius: 2px; background: #4cc2ff; }
.open::after { width: 8px; margin-left: -4px; background: #9a9a9a; }
.tab-tile { width: 28px; height: 28px; padding: 1px; background: #fff; }
.open > svg { margin: -8px 0 0 6px; }
.open b { position: absolute; left: 28px; top: 4px; width: 20px; font-size: 13px; font-weight: 400; line-height: 20px; text-align: center; }
.apps .t { position: absolute; left: 13px; top: 18px; width: 15px; font-size: 12px; line-height: 15px; }
.tray { display: flex; align-items: center; justify-content: flex-end; padding-right: 24px; }
.tray button { margin-right: 22px; }
.lang { margin-right: 22px; text-align: center; }
.tray .net { display: flex; gap: 10px; margin-right: 19px; }
.clock { text-align: right; }
```
